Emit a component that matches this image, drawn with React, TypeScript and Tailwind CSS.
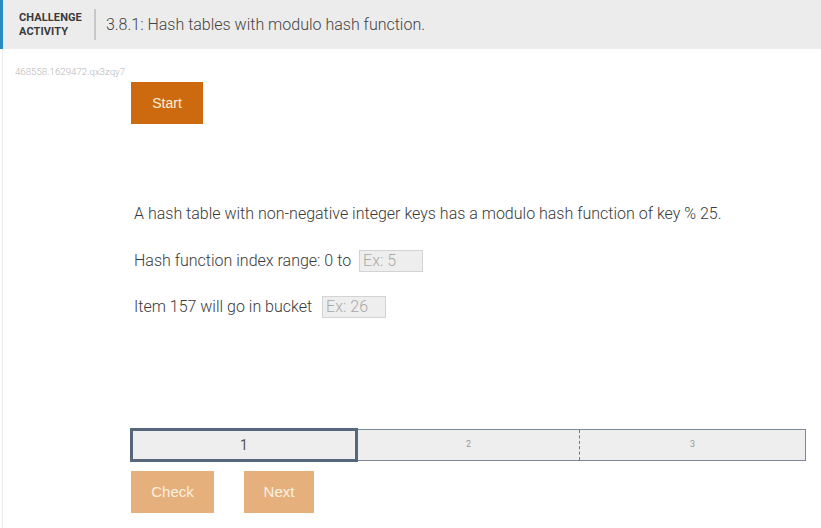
import React from "react";

export default function App() {
  const body = { fontFamily: "Roboto, 'Liberation Sans', sans-serif" };
  const btn = { fontFamily: "'Liberation Sans', Arial, sans-serif" };
  return (
    <div className="w-[821px] h-[528px] bg-white overflow-hidden relative" style={body}>
      <div className="h-[49px] bg-[#ececec] border-l-[3px] border-[#2b8bc4] flex items-center pl-[16px]">
        <div className="text-[11px] font-bold leading-[14px] text-[#3a3a3a] tracking-[0.1px]">
          <div>CHALLENGE</div>
          <div>ACTIVITY</div>
        </div>
        <div className="w-[2px] h-[31px] bg-[#c8c8c8] ml-[12px]" />
        <div className="ml-[10px] text-[16px] font-light text-[#444] leading-[20px]">
          3.8.1: Hash tables with modulo hash function.
        </div>
      </div>
      <div className="border-l border-[#ebebeb] ml-[2px] h-[479px] flex flex-col">
        <div className="pl-[12px] pt-[17px] text-[9.7px] leading-[11px] text-[#b5b5b5] font-light">
          468558.1629472.qx3zqy7
        </div>
        <div className="pl-[128px] flex flex-col">
          <button className="mt-[5px] w-[72px] h-[42px] bg-[#cd6a0f] text-[#fbefdc] text-[14px]" style={btn}>
            Start
          </button>
          <p className="mt-[80px] ml-[3px] text-[16px] font-light leading-[20px] text-[#3a3a3a]">
            A hash table with non-negative integer keys has a modulo hash function of key % 25.
          </p>
          <div className="mt-[26px] ml-[3px] flex items-center h-[22px] text-[16px] font-light text-[#3a3a3a]">
            <span>Hash function index range: 0 to</span>
            <div className="ml-[8px] w-[64px] h-[22px] bg-[#eeeeee] border border-[#d3d3d3] pl-[3px] text-[#a9a9a9] leading-[20px]">
              Ex: 5
            </div>
          </div>
          <div className="mt-[24px] ml-[3px] flex items-center h-[22px] text-[16px] font-light text-[#3a3a3a]">
            <span>Item 157 will go in bucket</span>
            <div className="ml-[10px] w-[64px] h-[22px] bg-[#eeeeee] border border-[#d3d3d3] pl-[3px] text-[#a9a9a9] leading-[20px]">
              Ex: 26
            </div>
          </div>
          <div className="mt-[110px] -ml-[1px] w-[676px] h-[34px] flex items-center">
            <div className="w-[228px] h-[34px] border-[3px] border-[#56677b] bg-[#eeeeee] flex items-center justify-center text-[14px] text-[#555]">
              1
            </div>
            <div className="flex-1 h-[32px] border border-l-0 border-[#7b8897] bg-[#eeeeee] flex">
              <div className="w-[222px] border-r border-dashed border-[#6b7888] flex items-center justify-center text-[9px] text-[#999]">
                2
              </div>
              <div className="flex-1 flex items-center justify-center text-[9px] text-[#999]">3</div>
            </div>
          </div>
          <div className="mt-[9px] flex gap-[30px]">
            <button className="w-[83px] h-[42px] bg-[#e5b07c] text-[#fdf1e1] text-[15px]" style={btn}>
              Check
            </button>
            <button className="w-[70px] h-[42px] bg-[#e5b07c] text-[#fdf1e1] text-[15px]" style={btn}>
              Next
            </button>
          </div>
        </div>
      </div>
    </div>
  );
}
